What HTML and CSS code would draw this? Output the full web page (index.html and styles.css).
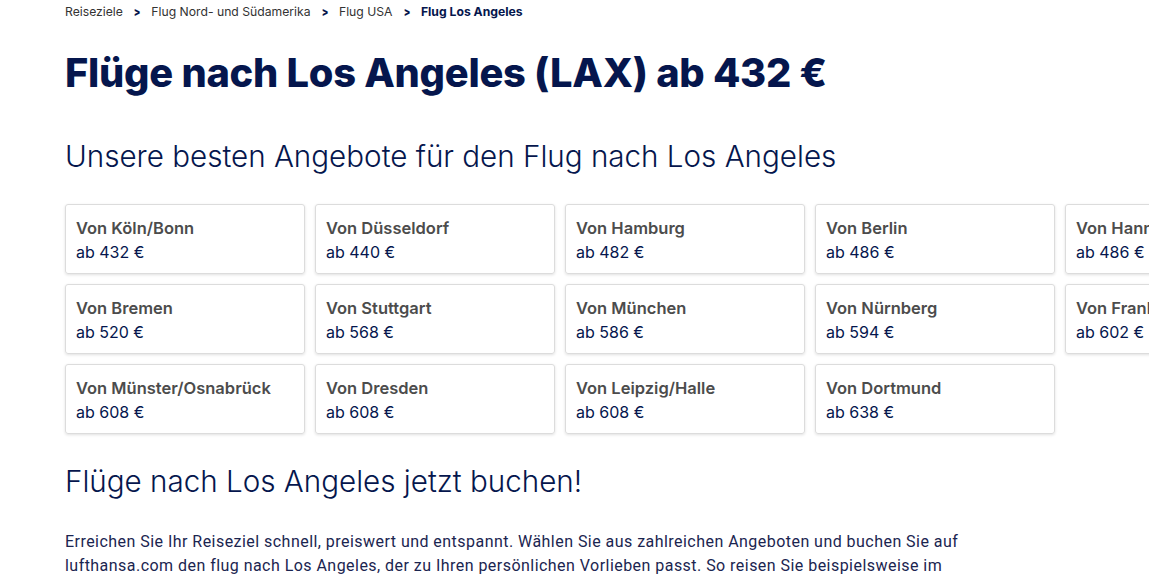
FILE: index.html
```html
<!DOCTYPE html>
<html lang="de">
<head>
    <meta charset="UTF-8">
    <meta name="viewport" content="width=device-width, initial-scale=1.0">
    <title>Flüge nach Los Angeles</title>
    <link rel="stylesheet" href="styles.css">
</head>
<body>
    <main class="page">
        <nav class="breadcrumb">
            <a href="#">Reiseziele</a>
            <span class="sep">&gt;</span>
            <a href="#">Flug Nord- und Südamerika</a>
            <span class="sep">&gt;</span>
            <a href="#">Flug USA</a>
            <span class="sep">&gt;</span>
            <span class="current">Flug Los Angeles</span>
        </nav>

        <h1 class="title">Flüge nach Los Angeles (LAX) ab 432 €</h1>

        <h2 class="section-title">Unsere besten Angebote für den Flug nach Los Angeles</h2>

        <section class="offers">
            <a class="offer" href="#"><strong>Von Köln/Bonn</strong><span>ab 432 €</span></a>
            <a class="offer" href="#"><strong>Von Düsseldorf</strong><span>ab 440 €</span></a>
            <a class="offer" href="#"><strong>Von Hamburg</strong><span>ab 482 €</span></a>
            <a class="offer" href="#"><strong>Von Berlin</strong><span>ab 486 €</span></a>
            <a class="offer" href="#"><strong>Von Hannover</strong><span>ab 486 €</span></a>
            <a class="offer" href="#"><strong>Von Bremen</strong><span>ab 520 €</span></a>
            <a class="offer" href="#"><strong>Von Stuttgart</strong><span>ab 568 €</span></a>
            <a class="offer" href="#"><strong>Von München</strong><span>ab 586 €</span></a>
            <a class="offer" href="#"><strong>Von Nürnberg</strong><span>ab 594 €</span></a>
            <a class="offer" href="#"><strong>Von Frankfurt</strong><span>ab 602 €</span></a>
            <a class="offer" href="#"><strong>Von Münster/Osnabrück</strong><span>ab 608 €</span></a>
            <a class="offer" href="#"><strong>Von Dresden</strong><span>ab 608 €</span></a>
            <a class="offer" href="#"><strong>Von Leipzig/Halle</strong><span>ab 608 €</span></a>
            <a class="offer" href="#"><strong>Von Dortmund</strong><span>ab 638 €</span></a>
        </section>

        <h2 class="section-title">Flüge nach Los Angeles jetzt buchen!</h2>

        <p class="intro">
            Erreichen Sie Ihr Reiseziel schnell, preiswert und entspannt. Wählen Sie aus zahlreichen Angeboten und buchen Sie auf
            lufthansa.com den flug nach Los Angeles, der zu Ihren persönlichen Vorlieben passt. So reisen Sie beispielsweise im
            Economy Class Tarif komfortabel und günstig an Ihr Ziel.
        </p>
    </main>
</body>
</html>
```

FILE: styles.css
```css
/* Base */
body {
    margin: 0;
    font-family: 'Inter', 'Liberation Sans', sans-serif;
    color: #05164d;
    background: #fff;
    overflow-x: hidden;
}

.page {
    padding: 0 0 0 65px;
    width: 1240px;
}

/* Breadcrumb */
.breadcrumb {
    display: flex;
    align-items: center;
    gap: 10px;
    padding-top: 4px;
    font-size: 12.2px;
    line-height: 16px;
}

.breadcrumb a {
    color: #333;
    text-decoration: none;
}

.breadcrumb .sep {
    font-weight: 800;
    color: #05164d;
    transform: scaleX(0.8);
}

.breadcrumb .current {
    font-weight: 700;
}

/* Headings */
.title {
    margin: 28px 0 0;
    font-size: 39.8px;
    line-height: 50px;
    font-weight: 800;
    letter-spacing: -0.25px;
}

.section-title {
    margin: 0;
    font-size: 29.6px;
    font-weight: 300;
    line-height: 40px;
}

.title + .section-title {
    margin-top: 38px;
}

/* Offer cards */
.offers {
    display: grid;
    grid-template-columns: repeat(5, 240px);
    gap: 10px;
    margin: 28px 0 27px;
}

.offer {
    display: flex;
    flex-direction: column;
    height: 70px;
    box-sizing: border-box;
    padding: 11px 10px 0;
    border: 1px solid #dcdcdc;
    border-radius: 3px;
    box-shadow: 0 1px 3px rgba(0, 0, 0, 0.12);
    text-decoration: none;
    color: #05164d;
    font-size: 16px;
    line-height: 24px;
}

.offer strong {
    color: #4c4c4c;
    font-size: 16.5px;
    font-weight: 600;
}

/* Text */
.intro {
    margin: 29px 0 0;
    width: 905px;
    font-family: 'Roboto', 'Liberation Sans', sans-serif;
    font-size: 16px;
    letter-spacing: 0.46px;
    line-height: 24px;
    color: #1b2550;
}
```
